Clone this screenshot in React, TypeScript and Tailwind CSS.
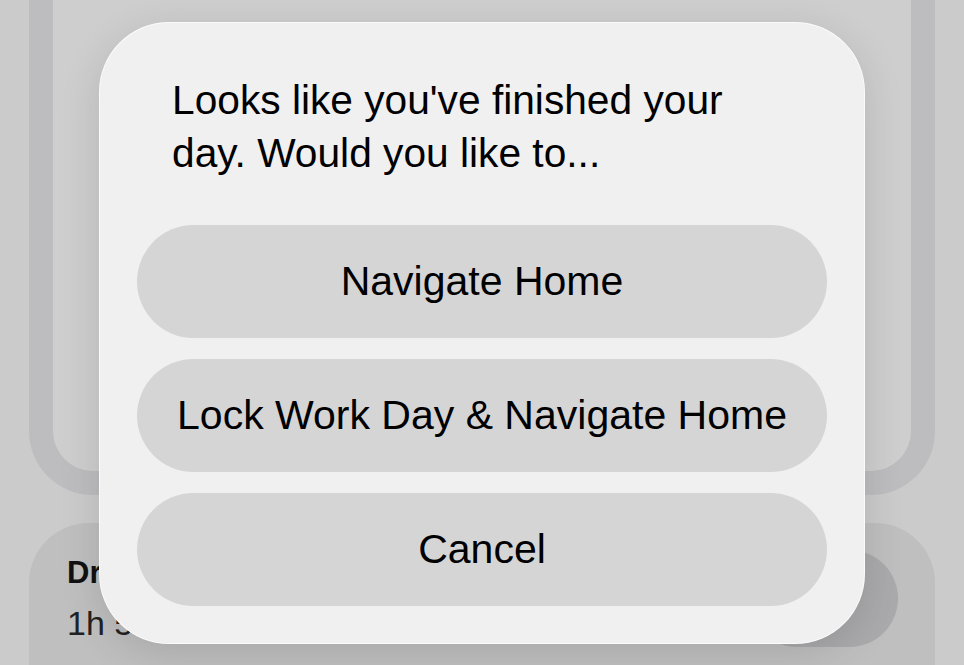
import React from 'react';

const actions = ['Navigate Home', 'Lock Work Day & Navigate Home', 'Cancel'];

const App = () => {
  return (
    <div className="relative h-[665px] w-[964px] overflow-hidden bg-[#cbcbcb] font-['Liberation_Sans',Arial,sans-serif] text-black">
      {/* Page content behind the alert */}
      <div className="flex flex-col gap-[28px] px-[29px]">
        <div className="h-[495px] rounded-b-[64px] border-[24px] border-t-0 border-[#bdbdbf] bg-[#cecece]" />

        <div className="flex h-[160px] items-start justify-between rounded-t-[60px] bg-[#bfbfbf] pl-[38px] pr-[37px]">
          <div className="flex flex-col gap-[12px] pt-[31px]">
            <div className="text-[31px] font-bold leading-[37px] text-[#111]">Drive Time</div>
            <div className="text-[34px] leading-[41px] text-[#222]">1h 52m</div>
          </div>
          <div className="mt-[27px] h-[97px] w-[150px] rounded-full bg-[#aaaaac]" />
        </div>
      </div>

      {/* Alert */}
      <div className="absolute left-[99px] top-[22px] flex w-[766px] flex-col rounded-[70px] border border-white/70 bg-[#f0f0f0] px-[37px] pb-[37px] pt-[51px] shadow-[0_10px_40px_rgba(0,0,0,0.12)]">
        <p className="px-[35px] text-[40.7px] leading-[53px]">
          Looks like you've finished your day. Would you like to...
        </p>
        <div className="mt-[45px] flex flex-col gap-[21px]">
          {actions.map((label) => (
            <button
              key={label}
              className="flex h-[113px] items-center justify-center rounded-full bg-[#d5d5d5] text-[41px]"
            >
              {label}
            </button>
          ))}
        </div>
      </div>
    </div>
  );
};

export default App;
